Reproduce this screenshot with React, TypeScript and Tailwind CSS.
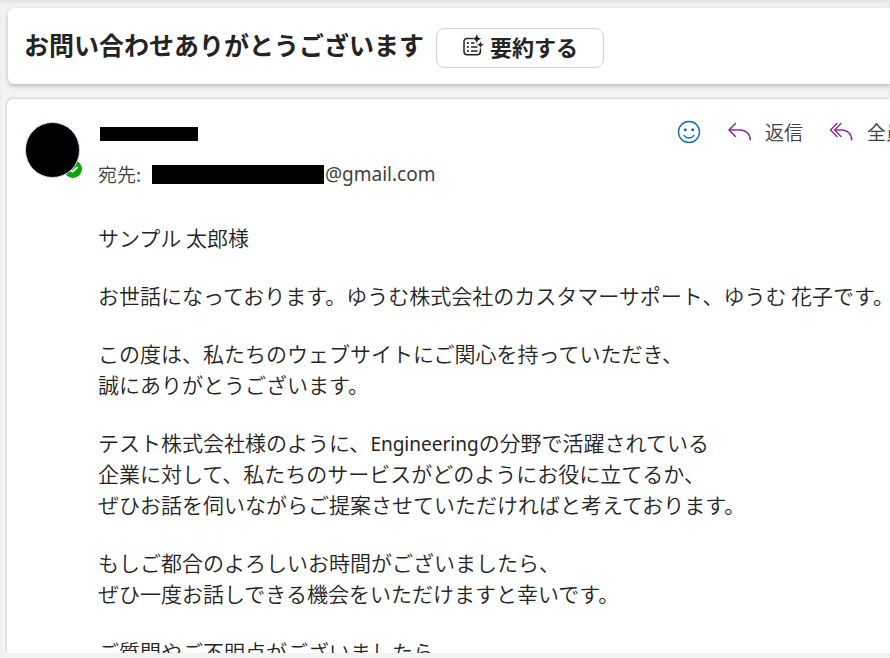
import React from 'react';

interface ActionItem {
  label: string;
  icon: React.ComponentType;
}

const SummaryIcon: React.FC = () => (
  <svg className="h-6 w-6 shrink-0" viewBox="0 0 24 24" fill="none" stroke="#242424" strokeWidth="1.5" strokeLinecap="round">
    <path d="M10.500 4.400H5.200A3.200 3.200 0 0 0 2 7.600V17.500a3.200 3.200 0 0 0 3.200 3.200h10a3.200 3.200 0 0 0 3.200-3.200V15" />
    <path d="M9.500 9h2.500M9.500 13h5.500M9.500 17h5.500" />
    <g fill="#242424" stroke="none">
      <circle cx="5.900" cy="9" r="1.100" />
      <circle cx="5.900" cy="13" r="1.100" />
      <circle cx="5.900" cy="17" r="1.100" />
      <path d="M14.800 0c.8 3.200 1.500 3.900 4.700 4.800-3.200.9-3.900 1.600-4.700 4.800-.8-3.200-1.500-3.900-4.700-4.800 3.200-.9 3.900-1.600 4.700-4.800z" />
      <path d="M18.400 7.200c.6 2.300 1.200 2.900 3.500 3.500-2.300.6-2.900 1.200-3.500 3.500-.6-2.300-1.200-2.900-3.500-3.500 2.300-.6 2.900-1.200 3.500-3.500z" />
    </g>
  </svg>
);

const SmileIcon: React.FC = () => (
  <svg className="h-6 w-6" viewBox="0 0 24 24" fill="none" stroke="#0f6cbd" strokeWidth="1.4" strokeLinecap="round">
    <circle cx="12" cy="12" r="10.500" />
    <path d="M7 15.400c2.400 3.400 7.600 3.400 10 0" />
    <g fill="#0f6cbd" stroke="none">
      <circle cx="8.300" cy="9.800" r="1.500" />
      <circle cx="15.700" cy="9.800" r="1.500" />
    </g>
  </svg>
);

const ReplyIcon: React.FC = () => (
  <svg className="h-6 w-6" viewBox="0 0 24 24" fill="none" stroke="#8f2b9c" strokeWidth="1.5" strokeLinecap="round" strokeLinejoin="round">
    <path d="M8.500 3.500 2 10l6.500 6.500" />
    <path d="M2.400 10H13c6 0 10.200 4 10.200 9.800" />
  </svg>
);

const ReplyAllIcon: React.FC = () => (
  <svg className="h-6 w-6" viewBox="0 0 24 24" fill="none" stroke="#8f2b9c" strokeWidth="1.5" strokeLinecap="round" strokeLinejoin="round">
    <path d="M8 3.500 1.500 10l6.500 6.500" />
    <path d="M12 3.500 5.500 10l6.500 6.500" />
    <path d="M5.900 10H12.500c6 0 10.200 4 10.200 9.800" />
  </svg>
);

const actions: ActionItem[] = [
  { label: '返信', icon: ReplyIcon },
  { label: '全員に返信', icon: ReplyAllIcon },
];

const paragraphs: React.ReactNode[][] = [
  ['サンプル 太郎様'],
  ['お世話になっております。ゆうむ株式会社のカスタマーサポート、ゆうむ 花子です。'],
  ['この度は、私たちのウェブサイトにご関心を持っていただき、', '誠にありがとうございます。'],
  [
    <>
      テスト株式会社様のように、
      <span className="font-['Noto_Sans',sans-serif] text-[19px] leading-none font-normal">Engineering</span>
      の分野で活躍されている
    </>,
    '企業に対して、私たちのサービスがどのようにお役に立てるか、',
    'ぜひお話を伺いながらご提案させていただければと考えております。',
  ],
  ['もしご都合のよろしいお時間がございましたら、', 'ぜひ一度お話しできる機会をいただけますと幸いです。'],
  ['ご質問やご不明点がございましたら、'],
];

const Subject: React.FC = () => (
  <header className="ml-px flex h-[76px] shrink-0 items-center gap-3 rounded-l-md bg-white pt-1 pl-4 shadow-[0_2px_5px_rgba(0,0,0,0.24)]">
    <h1 className="pb-2 text-[25px] leading-9 font-bold whitespace-nowrap">お問い合わせありがとうございます</h1>
    <button
      type="button"
      className="flex h-10 w-[168px] shrink-0 items-center justify-center gap-1 rounded-lg border border-[#d1d1d1] bg-white pb-1 text-[22px] leading-8 font-bold"
    >
      <SummaryIcon />
      要約する
    </button>
  </header>
);

const Avatar: React.FC = () => (
  <div className="relative h-14 w-[55px] shrink-0">
    <svg className="absolute -right-0.5 bottom-0 h-[18px] w-[18px]" viewBox="0 0 18 18">
      <circle cx="9" cy="9" r="9" fill="#13a10e" />
      <path d="m6.500 10.500 2 1.200L13 7.500" fill="none" stroke="#fff" strokeWidth="1.800" strokeLinecap="round" />
    </svg>
    <div className="relative h-full w-full rounded-full border border-[#d9d0ff] bg-black" />
  </div>
);

const MessageHeader: React.FC = () => (
  <div className="flex gap-[18px]">
    <Avatar />
    <div className="min-w-0 flex-1">
      <div className="flex h-6 items-center">
        <span className="ml-0.5 h-[14px] w-[98px] bg-black" />
      </div>
      <div className="mt-4 flex h-6 items-center text-[19px] font-[350] whitespace-nowrap text-[#424242]">
        <span className="w-[54px]">宛先:</span>
        <span className="h-[19px] w-[172px] bg-black" />
        <span className="ml-px font-['Noto_Sans',sans-serif] font-normal">@gmail.com</span>
      </div>
    </div>
    <div className="-mt-0.5 flex h-6 w-[213px] shrink-0 items-center gap-[26px] overflow-hidden">
      <button type="button" aria-label="リアクション" className="shrink-0">
        <SmileIcon />
      </button>
      {actions.map((action) => (
        <button
          key={action.label}
          type="button"
          className="flex shrink-0 items-center gap-[14px] text-[19px] leading-6 font-[350] whitespace-nowrap text-[#424242]"
        >
          <action.icon />
          {action.label}
        </button>
      ))}
    </div>
  </div>
);

const App: React.FC = () => {
  return (
    <div className="flex h-screen flex-col gap-[15px] overflow-hidden bg-[#f3f3f3] pt-2 pb-[5px] pl-[7px] font-['Noto_Sans_CJK_JP',sans-serif] text-[#242424] shadow-[inset_0_3px_3px_rgba(0,0,0,0.06)]">
      <Subject />
      <main className="min-h-0 flex-1 overflow-hidden rounded-tl-md bg-white pt-[23px] pl-[18px] shadow-[-1px_-1px_2px_rgba(0,0,0,0.14)]">
        <MessageHeader />
        <article className="mt-9 space-y-[27px] pl-[73px] text-[21px] leading-[31px] font-[350] whitespace-nowrap">
          {paragraphs.map((lines, index) => (
            <p key={index}>
              {lines.map((line, lineIndex) => (
                <span key={lineIndex} className="block">
                  {line}
                </span>
              ))}
            </p>
          ))}
        </article>
      </main>
    </div>
  );
};

export default App;
